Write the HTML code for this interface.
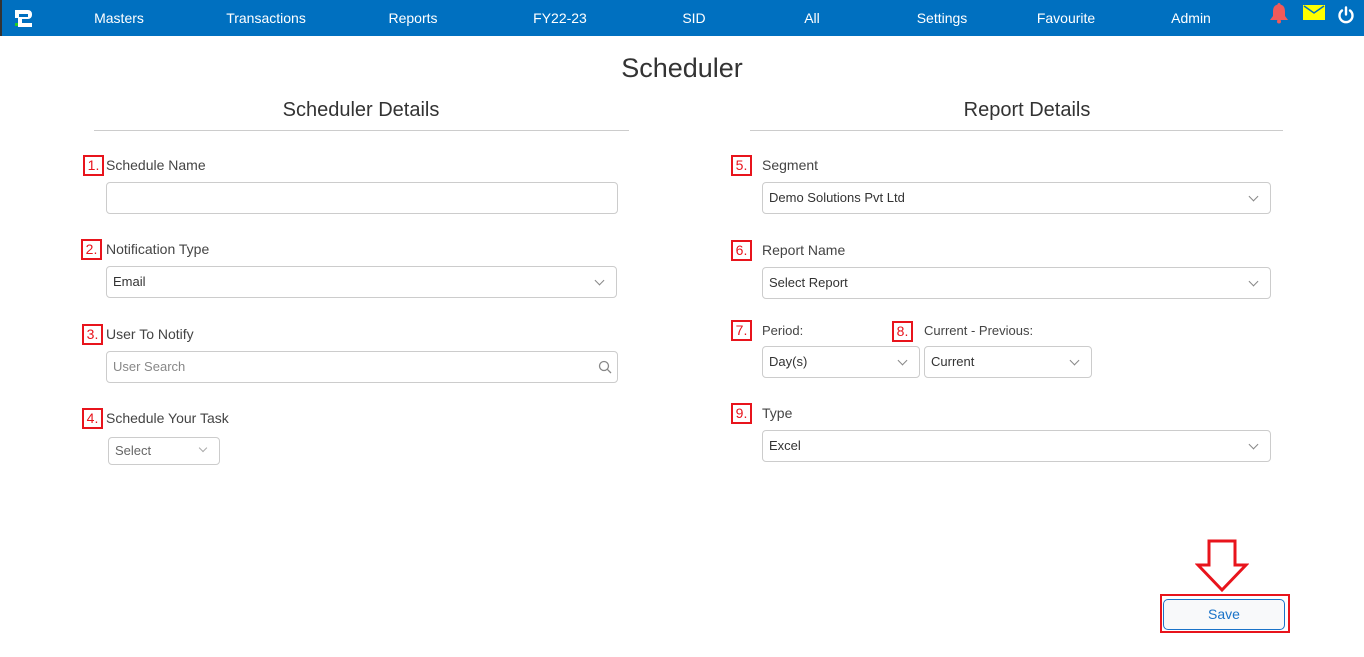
<!DOCTYPE html><html><head><style>
*{margin:0;padding:0;box-sizing:border-box}
body{width:1364px;height:657px;background:#fff;font-family:"Liberation Sans",sans-serif;position:relative;overflow:hidden;color:#444}
.nav{position:absolute;left:0;top:0;width:1364px;height:36px;background:#0070c0;border-left:2px solid #333}
.nav span{position:absolute;top:10px;color:#fff;font-size:14px;transform:translateX(-50%)}
.a{position:absolute}
.num{position:absolute;width:21px;height:21px;border:2px solid #e8141c;color:#e8141c;font-size:14px;line-height:17px;text-align:center}
.lbl{position:absolute;font-size:14px;color:#444}
.in{position:absolute;border:1px solid #ccc;border-radius:4px;height:32px;font-size:13px;color:#333;padding-left:6px;line-height:30px}
.chev{position:absolute;right:13px;top:10px;width:7px;height:7px;border-right:1.2px solid #888;border-bottom:1.2px solid #888;transform:rotate(45deg)}
h2{position:absolute;font-weight:normal;font-size:20px;color:#333;transform:translateX(-50%)}
.line{position:absolute;height:1px;background:#ccc;top:130px}
</style></head><body>
<div class="nav">
<svg class="a" style="left:11px;top:9px" width="20" height="19" viewBox="0 0 20 19"><path d="M2 1h13a4 4 0 0 1 4 4v1a4 4 0 0 1-4 4H9v4h10v4H5V8h10V5H6v4H2z" fill="#fff"/><rect x="2" y="14" width="3" height="3" fill="#2c2"/></svg>
<span style="left:117px">Masters</span><span style="left:264px">Transactions</span><span style="left:411px">Reports</span><span style="left:558px">FY22-23</span><span style="left:692px">SID</span><span style="left:810px">All</span><span style="left:940px">Settings</span><span style="left:1064px">Favourite</span><span style="left:1189px">Admin</span>
<svg class="a" style="left:1266px;top:2px" width="22" height="22" viewBox="0 0 22 22"><path d="M11 1c1 0 1.5.7 1.5 1.5C16 3.5 17 6 17 10v4l3 4H2l3-4v-4c0-4 1-6.5 4.5-7.5C9.5 1.7 10 1 11 1z" fill="#f05a5a"/><circle cx="11" cy="19.5" r="2" fill="#f05a5a"/></svg>
<svg class="a" style="left:1301px;top:5px" width="22" height="15" viewBox="0 0 22 15"><rect width="22" height="15" fill="#ffff00"/><path d="M1 1l10 7 10-7" stroke="#0070c0" stroke-width="1.5" fill="none"/></svg>
<svg class="a" style="left:1335px;top:6px" width="18" height="18" viewBox="0 0 18 18"><path d="M5 4.5A6.5 6.5 0 1 0 13 4.5" stroke="#fff" stroke-width="2.4" fill="none" stroke-linecap="round"/><path d="M9 1.5v7" stroke="#fff" stroke-width="2.4" stroke-linecap="round"/></svg>
</div>
<div class="a" style="left:0;width:1364px;top:53px;text-align:center;font-size:27px;color:#333">Scheduler</div>
<h2 style="left:361px;top:99px">Scheduler Details</h2><h2 style="left:1027px;top:99px">Report Details</h2>
<div class="line" style="left:94px;width:535px"></div><div class="line" style="left:750px;width:533px"></div>

<div class="num" style="left:83px;top:155px">1.</div><div class="lbl" style="left:106px;top:157px">Schedule Name</div>
<div class="in" style="left:106px;top:182px;width:512px"></div>
<div class="num" style="left:81px;top:239px">2.</div><div class="lbl" style="left:106px;top:241px">Notification Type</div>
<div class="in" style="left:106px;top:266px;width:511px">Email<div class="chev"></div></div>
<div class="num" style="left:82px;top:324px">3.</div><div class="lbl" style="left:106px;top:326px">User To Notify</div>
<div class="in" style="left:106px;top:351px;width:512px;color:#888">User Search
<svg class="a" style="right:5px;top:8px" width="14" height="14" viewBox="0 0 14 14"><circle cx="6" cy="6" r="4.5" stroke="#888" stroke-width="1.3" fill="none"/><path d="M9.3 9.3L13 13" stroke="#888" stroke-width="1.3"/></svg></div>
<div class="num" style="left:82px;top:408px">4.</div><div class="lbl" style="left:106px;top:410px">Schedule Your Task</div>
<div class="in" style="left:108px;top:437px;width:112px;height:28px;line-height:26px;color:#666">Select<div class="chev" style="width:6px;height:6px;top:7px;border-color:#aaa"></div></div>

<div class="num" style="left:731px;top:155px">5.</div><div class="lbl" style="left:762px;top:157px">Segment</div>
<div class="in" style="left:762px;top:182px;width:509px">Demo Solutions Pvt Ltd<div class="chev"></div></div>
<div class="num" style="left:731px;top:240px">6.</div><div class="lbl" style="left:762px;top:242px">Report Name</div>
<div class="in" style="left:762px;top:267px;width:509px">Select Report<div class="chev"></div></div>
<div class="num" style="left:731px;top:320px">7.</div><div class="lbl" style="left:762px;top:323px;font-size:13px">Period:</div>
<div class="num" style="left:892px;top:321px">8.</div><div class="lbl" style="left:924px;top:323px;font-size:13px">Current - Previous:</div>
<div class="in" style="left:762px;top:346px;width:158px">Day(s)<div class="chev"></div></div>
<div class="in" style="left:924px;top:346px;width:168px">Current<div class="chev"></div></div>
<div class="num" style="left:731px;top:403px">9.</div><div class="lbl" style="left:762px;top:405px">Type</div>
<div class="in" style="left:762px;top:430px;width:509px">Excel<div class="chev"></div></div>

<svg class="a" style="left:1195px;top:539px" width="54" height="54" viewBox="0 0 54 54"><path d="M14 2h26v24h11L27 51 3 26h11z" fill="#fff" stroke="#e8141c" stroke-width="3"/></svg>
<div class="a" style="left:1160px;top:594px;width:130px;height:39px;border:2px solid #e8141c"></div>
<div class="a" style="left:1163px;top:599px;width:122px;height:31px;border:1px solid #1a73c8;border-radius:5px;background:#f8f9fa;color:#1a73c8;font-size:14px;text-align:center;line-height:29px">Save</div>
</body></html>
